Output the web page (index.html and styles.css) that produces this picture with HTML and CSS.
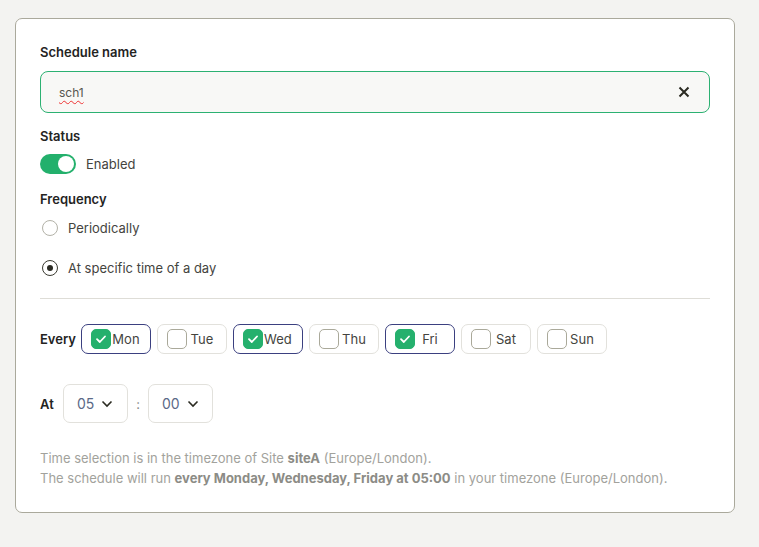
FILE: index.html
```html
<!DOCTYPE html>
<html>
<head>
<meta charset="utf-8">
<link rel="stylesheet" href="styles.css">
</head>
<body>
<div class="card">
  <div class="label">Schedule name</div>
  <div class="input">
    <span class="input-value">sch1</span>
    <svg class="clear" width="12" height="12" viewBox="0 0 12 12"><path d="M1.5 1.5 L10.5 10.5 M10.5 1.5 L1.5 10.5" stroke="#2b2b22" stroke-width="2" fill="none"/></svg>
  </div>

  <div class="label status-label">Status</div>
  <div class="toggle-row">
    <span class="toggle"><span class="knob"></span></span>
    <span class="text">Enabled</span>
  </div>

  <div class="label freq-label">Frequency</div>
  <div class="radio-row first">
    <span class="radio"></span><span class="text">Periodically</span>
  </div>
  <div class="radio-row">
    <span class="radio checked"><span class="dot"></span></span><span class="text">At specific time of a day</span>
  </div>

  <div class="divider"></div>

  <div class="days-row">
    <span class="row-label">Every</span>
    <div class="days">
      <span class="chip on"><span class="box"><svg width="14" height="14" viewBox="0 0 14 14"><path d="M3 7.2 L5.8 10 L11 4.5" stroke="#fff" stroke-width="1.8" fill="none" stroke-linecap="round" stroke-linejoin="round"/></svg></span><span class="day">Mon</span></span>
      <span class="chip"><span class="box"></span><span class="day">Tue</span></span>
      <span class="chip on"><span class="box"><svg width="14" height="14" viewBox="0 0 14 14"><path d="M3 7.2 L5.8 10 L11 4.5" stroke="#fff" stroke-width="1.8" fill="none" stroke-linecap="round" stroke-linejoin="round"/></svg></span><span class="day">Wed</span></span>
      <span class="chip"><span class="box"></span><span class="day">Thu</span></span>
      <span class="chip on"><span class="box"><svg width="14" height="14" viewBox="0 0 14 14"><path d="M3 7.2 L5.8 10 L11 4.5" stroke="#fff" stroke-width="1.8" fill="none" stroke-linecap="round" stroke-linejoin="round"/></svg></span><span class="day">Fri</span></span>
      <span class="chip"><span class="box"></span><span class="day">Sat</span></span>
      <span class="chip"><span class="box"></span><span class="day">Sun</span></span>
    </div>
  </div>

  <div class="time-row">
    <span class="row-label at">At</span>
    <span class="select"><span class="val">05</span><svg width="12" height="8" viewBox="0 0 12 8"><path d="M1.5 1.5 L6 6 L10.5 1.5" stroke="#2b2b22" stroke-width="1.6" fill="none"/></svg></span>
    <span class="colon">:</span>
    <span class="select"><span class="val">00</span><svg width="12" height="8" viewBox="0 0 12 8"><path d="M1.5 1.5 L6 6 L10.5 1.5" stroke="#2b2b22" stroke-width="1.6" fill="none"/></svg></span>
  </div>

  <div class="note">
    <div>Time selection is in the timezone of Site <b>siteA</b> (Europe/London).</div>
    <div>The schedule will run <b>every Monday, Wednesday, Friday at 05:00</b> in your timezone (Europe/London).</div>
  </div>
</div>
</body>
</html>
```

FILE: styles.css
```css
* { box-sizing: border-box; }
body {
  margin: 0;
  background: #f3f3f1;
  font-family: "Inter", "Liberation Sans", sans-serif;
  font-size: 13px;
  color: #3f3f3a;
}
.card {
  margin: 18px 0 0 15px;
  width: 720px;
  background: #fff;
  border: 1px solid #aaa99c;
  border-radius: 7px;
  padding: 24px 24px 24px 24px;
  display: flex;
  flex-direction: column;
}
.label {
  font-weight: 600;
  color: #24241f;
  line-height: 18px;
}
.input {
  margin-top: 10px;
  height: 42px;
  border: 1px solid #2cb172;
  border-radius: 8px;
  background: #f8f8f6;
  display: flex;
  align-items: center;
  padding: 0 19px 0 18px;
}
.input-value {
  flex: 1;
  color: #55554f;
  font-size: 12px;
  text-decoration: underline wavy #e33;
  text-decoration-thickness: 1px;
  text-underline-offset: 3px;
}
.status-label { margin-top: 14px; }
.toggle-row {
  margin-top: 9px;
  display: flex;
  align-items: center;
  height: 20px;
}
.toggle {
  width: 36px;
  height: 20px;
  border-radius: 10px;
  background: #23b06c;
  display: flex;
  align-items: center;
  justify-content: flex-end;
  padding: 0 2px;
}
.knob {
  width: 16px;
  height: 16px;
  border-radius: 50%;
  background: #fff;
}
.text { margin-left: 10px; color: #44443e; }
.freq-label { margin-top: 16px; }
.radio-row {
  margin-top: 20px;
  display: flex;
  align-items: center;
  height: 20px;
}
.radio-row.first { margin-top: 10px; }
.radio {
  margin-left: 2px;
  width: 16px;
  height: 16px;
  border-radius: 50%;
  border: 1px solid #b3b2a8;
  display: flex;
  align-items: center;
  justify-content: center;
}
.radio.checked { border: 1.5px solid #3a3a30; }
.dot { width: 6px; height: 6px; border-radius: 50%; background: #2a2a22; }
.radio-row .text { margin-left: 10px; }
.divider {
  margin-top: 20px;
  height: 1px;
  background: #deddd7;
}
.days-row {
  margin-top: 25px;
  display: flex;
  align-items: center;
}
.row-label { font-weight: 600; color: #24241f; }
.days { display: flex; gap: 6px; margin-left: 5px; }
.chip {
  width: 70px;
  height: 30px;
  border: 1px solid #e2e1dc;
  border-radius: 7px;
  display: flex;
  align-items: center;
  padding: 0 9px;
}
.chip.on { border-color: #3b4080; }
.box {
  width: 20px;
  height: 20px;
  border: 1.5px solid #aaa99a;
  border-radius: 5px;
  display: flex;
  align-items: center;
  justify-content: center;
  flex: none;
}
.chip.on .box { background: #25b06d; border-color: #25b06d; }
.day { flex: 1; text-align: center; color: #44443e; }
.time-row {
  margin-top: 30px;
  display: flex;
  align-items: center;
}
.at { width: 23px; }
.select {
  width: 65px;
  height: 39px;
  border: 1px solid #e2e1dc;
  border-radius: 7px;
  display: flex;
  align-items: center;
  padding: 0 0 0 13px;
  gap: 7px;
}
.val { color: #5b6987; font-size: 14px; }
.colon { width: 20px; text-align: center; color: #888; }
.note {
  margin-top: 25px;
  color: #a2a29c;
  line-height: 20px;
}
.note b { color: #8c8c86; font-weight: 700; }
```
